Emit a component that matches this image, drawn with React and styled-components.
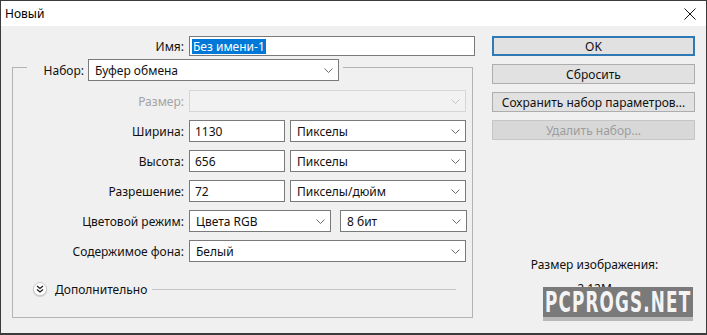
import React from "react"
import styled, { createGlobalStyle } from "styled-components"

const GlobalStyle = createGlobalStyle`
  html, body {
    margin: 0;
    padding: 0;
    background: #f0f0f0;
  }
  body {
    font-family: "Noto Sans", "Open Sans", sans-serif;
    font-size: 12px;
    color: #111;
  }
`

const Chevron = ({ disabled }) => (
  <ChevronIcon width="9" height="5" viewBox="0 0 9 5" $disabled={disabled}>
    <path d="M0.5 0.5 L4.5 4.5 L8.5 0.5" fill="none" stroke="currentColor" strokeWidth="1" />
  </ChevronIcon>
)

const Select = ({ value, width, disabled, offset }) => (
  <Dropdown $width={width} $disabled={disabled} $offset={offset}>
    <span>{value}</span>
    <Chevron disabled={disabled} />
  </Dropdown>
)

const App = () => {
  return (
    <>
      <GlobalStyle />
      <Window>
        <TitleBar>
          <Title>Новый</Title>
          <svg width="12" height="12" viewBox="0 0 12 12">
            <path d="M0.5 0.5 L11.5 11.5 M11.5 0.5 L0.5 11.5" stroke="#111" strokeWidth="1" />
          </svg>
        </TitleBar>

        <Body>
          <FormColumn>
            <Row>
              <Label $width={183}>Имя:</Label>
              <TextBox $width={286}>
                <Selected>Без имени-1</Selected>
              </TextBox>
            </Row>

            <GroupBox>
              <Legend>
                <LegendLabel>Набор:</LegendLabel>
                <Select value="Буфер обмена" width={251} />
              </Legend>

              <Rows>
                <Row>
                  <Label $width={171} $disabled>Размер:</Label>
                  <Select value="" width={277} disabled />
                </Row>
                <Row>
                  <Label $width={171}>Ширина:</Label>
                  <TextBox $width={97}>1130</TextBox>
                  <Select value="Пикселы" width={176} />
                </Row>
                <Row>
                  <Label $width={171}>Высота:</Label>
                  <TextBox $width={97}>656</TextBox>
                  <Select value="Пикселы" width={176} />
                </Row>
                <Row>
                  <Label $width={171}>Разрешение:</Label>
                  <TextBox $width={97}>72</TextBox>
                  <Select value="Пикселы/дюйм" width={176} />
                </Row>
                <Row>
                  <Label $width={171}>Цветовой режим:</Label>
                  <Select value="Цвета RGB" width={142} />
                  <Select value="8 бит" width={127} offset={4} />
                </Row>
                <Row>
                  <Label $width={171}>Содержимое фона:</Label>
                  <Select value="Белый" width={277} />
                </Row>
              </Rows>

              <MoreRow>
                <MoreIcon>
                  <svg width="8" height="8" viewBox="0 0 8 8">
                    <path d="M1 1 L4 3.5 L7 1 M1 4.5 L4 7 L7 4.5" fill="none" stroke="#222" strokeWidth="1.3" />
                  </svg>
                </MoreIcon>
                <span>Дополнительно</span>
                <Divider />
              </MoreRow>
            </GroupBox>
          </FormColumn>

          <ButtonColumn>
            <Button $default>OK</Button>
            <Button>Сбросить</Button>
            <Button>Сохранить набор параметров...</Button>
            <Button $disabled>Удалить набор...</Button>

            <Info>
              <div>Размер изображения:</div>
              <InfoValue>2,12M</InfoValue>
            </Info>
          </ButtonColumn>
        </Body>

        <Watermark>
          <WatermarkText>PCPROGS.NET</WatermarkText>
        </Watermark>
      </Window>
    </>
  )
}

const Window = styled.div`
  position: relative;
  box-sizing: border-box;
  width: 707px;
  height: 335px;
  border: 1px solid #3b3b3b;
  border-bottom-width: 2px;
  background: #f0f0f0;
  display: flex;
  flex-direction: column;
  overflow: hidden;
`

const TitleBar = styled.div`
  height: 25px;
  flex: none;
  background: #fff;
  display: flex;
  align-items: center;
  justify-content: space-between;
  padding: 0 10px 0 4px;
`

const Title = styled.span`
  font-size: 12px;
  color: #000;
`

const Body = styled.div`
  display: flex;
  padding-top: 10px;
`

const FormColumn = styled.div`
  width: 474px;
  display: flex;
  flex-direction: column;
`

const Row = styled.div`
  display: flex;
  align-items: center;
  gap: 5px;
  height: 20px;
`

const Label = styled.div`
  width: ${(p) => p.$width}px;
  flex: none;
  text-align: right;
  color: ${(p) => (p.$disabled ? "#a3a3a3" : "#111")};
`

const TextBox = styled.div`
  box-sizing: border-box;
  width: ${(p) => p.$width}px;
  height: 100%;
  background: #fff;
  border: 1px solid #7a7a7a;
  padding: 0 5px;
  display: flex;
  align-items: center;
  white-space: nowrap;
`

const Selected = styled.span`
  background: #0078d7;
  color: #fff;
  line-height: 15px;
  padding: 0 1px;
  margin-left: -3px;
`

const Dropdown = styled.div`
  box-sizing: border-box;
  width: ${(p) => p.$width}px;
  height: 22px;
  flex: none;
  margin-left: ${(p) => p.$offset || 0}px;
  background: ${(p) => (p.$disabled ? "#f2f2f2" : "#fff")};
  border: 1px solid ${(p) => (p.$disabled ? "#d6d6d6" : "#7a7a7a")};
  padding: 0 5px 0 6px;
  display: flex;
  align-items: center;
  justify-content: space-between;
  white-space: nowrap;
`

const ChevronIcon = styled.svg`
  color: ${(p) => (p.$disabled ? "#c4c4c4" : "#6a6a6a")};
  flex: none;
`

const GroupBox = styled.fieldset`
  box-sizing: border-box;
  width: 461px;
  margin: -3px 0 0 11px;
  padding: 0 6px 20px 0;
  border: 1px solid #b4b4b4;
  min-width: 0;
`

const Legend = styled.legend`
  display: flex;
  align-items: center;
  gap: 4px;
  margin-left: 14px;
  padding: 6px 4px 0 2px;
`

const LegendLabel = styled.span`
  width: 55px;
  text-align: right;
`

const Rows = styled.div`
  display: flex;
  flex-direction: column;
  gap: 8px;
  margin-top: 9px;

  & > div {
    height: 22px;
  }
`

const MoreRow = styled.div`
  display: flex;
  align-items: center;
  height: 16px;
  margin-top: 19px;
  padding-left: 20px;
  gap: 8px;
`

const MoreIcon = styled.span`
  box-sizing: border-box;
  width: 14px;
  height: 14px;
  border-radius: 50%;
  background: #fff;
  border: 1px solid #c8c8c8;
  box-shadow: 0 1px 1px rgba(0, 0, 0, 0.15);
  display: flex;
  align-items: center;
  justify-content: center;
`

const Divider = styled.span`
  flex: 1;
  height: 1px;
  background: #c4c4c4;
  margin: 0 10px 0 -3px;
`

const ButtonColumn = styled.div`
  width: 203px;
  margin-left: 17px;
  display: flex;
  flex-direction: column;
  gap: 8px;
`

const Button = styled.div`
  box-sizing: border-box;
  height: 20px;
  display: flex;
  align-items: center;
  justify-content: center;
  background: ${(p) => (p.$disabled ? "#d8d8d8" : "#e1e1e1")};
  border: ${(p) => (p.$default ? "2px solid #2f7ab5" : "1px solid #adadad")};
  border-color: ${(p) => (p.$disabled ? "#c6c6c6" : p.$default ? "#2f7ab5" : "#adadad")};
  color: ${(p) => (p.$disabled ? "#9d9d9d" : "#111")};
  white-space: nowrap;
`

const Info = styled.div`
  margin-top: 109px;
  text-align: center;
  line-height: 16px;
  padding-left: 2px;
`

const InfoValue = styled.div`
  margin-top: 8px;
`

const Watermark = styled.div`
  position: absolute;
  left: 542px;
  top: 286px;
  width: 150px;
  height: 30px;
  background: #7a7a7a;
  border-bottom: 4px solid #b8b8b8;
  display: flex;
  align-items: center;
  justify-content: center;
`

const WatermarkText = styled.span`
  display: inline-block;
  flex: none;
  color: #f4f4f4;
  font-family: "DejaVu Sans", sans-serif;
  font-weight: bold;
  font-size: 29px;
  line-height: 30px;
  letter-spacing: 2px;
  white-space: nowrap;
  transform: scaleX(0.58);
  transform-origin: center;
`

export default App
